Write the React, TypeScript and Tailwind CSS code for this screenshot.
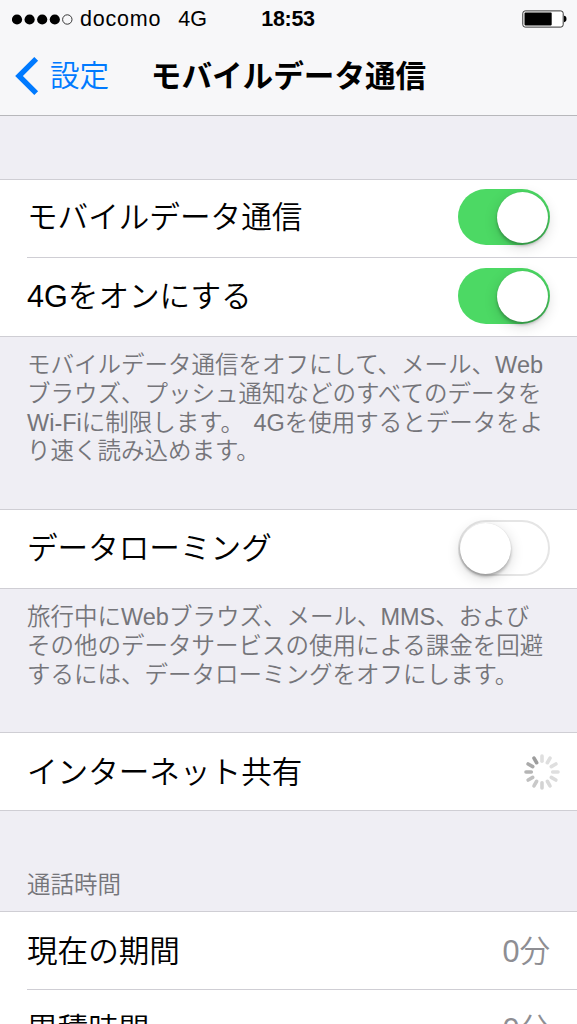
import React, { useState } from 'react';

interface SwitchProps {
  label: string;
  initial: boolean;
}

const Switch: React.FC<SwitchProps> = ({ label, initial }) => {
  const [on, setOn] = useState(initial);

  return (
    <button
      role="switch"
      aria-checked={on}
      aria-label={label}
      onClick={() => setOn(!on)}
      className={`flex h-14 w-[92px] shrink-0 items-center rounded-full ${
        on ? 'justify-end bg-[#4cd964] pr-[2.5px]' : 'justify-start border-[2.5px] border-[#e5e5e5] bg-white'
      }`}
    >
      <span className="size-[51px] rounded-full bg-white shadow-[0_0_1px_rgba(0,0,0,0.15),0_3px_3px_rgba(0,0,0,0.22),0_4px_14px_rgba(0,0,0,0.16)]" />
    </button>
  );
};

const SPOKES = ['#dfdfdf', '#dfdfdf', '#dfdfdf', '#dfdfdf', '#dbdbdb', '#d9d9d9', '#d3d3d3', '#c9c9c9', '#c0c0c0', '#b5b5b5', '#aaaaaa', '#9d9d9d'];

const Spinner = () => (
  <svg viewBox="-18 -18 36 36" className="mr-[-10px] size-9 shrink-0">
    {SPOKES.map((color, i) => (
      <line key={i} x1="0" y1="-10.7" x2="0" y2="-16" stroke={color} strokeWidth="3.6" strokeLinecap="round" transform={`rotate(${i * 30})`} />
    ))}
  </svg>
);

interface RowProps {
  label: string;
  className?: string;
  children: React.ReactNode;
}

const Row: React.FC<RowProps> = ({ label, className = 'h-[78px] pb-0.5', children }) => (
  <div className={`flex items-center justify-between pr-[27px] ${className}`}>
    <span className="whitespace-nowrap text-[30.6px] leading-10 text-black">{label}</span>
    {children}
  </div>
);

const Group: React.FC<{ children: React.ReactNode }> = ({ children }) => (
  <section className="border-y border-[#cfced4] bg-white pl-[27px]">
    <div className="divide-y divide-[#cfced4]">{children}</div>
  </section>
);

const Note: React.FC<{ lines: string[] }> = ({ lines }) => (
  <div className="whitespace-nowrap pl-[27px] text-[23.5px] leading-[28.8px] text-[#75757a] [word-spacing:3px]">
    {lines.map((line) => (
      <p key={line}>{line}</p>
    ))}
  </div>
);

const StatusBar = () => (
  <div className="grid h-9 grid-cols-3 items-center pl-3 pr-2.5 pt-px text-[21.5px] leading-9 text-black">
    <div className="flex items-center whitespace-nowrap">
      <svg viewBox="0 0 61 11" className="mr-[7px] h-[11px] w-[61px] shrink-0">
        {[5, 17.6, 30.2, 42.8].map((cx) => (
          <circle key={cx} cx={cx} cy="5.5" r="5.1" />
        ))}
        <circle cx="55.3" cy="5.5" r="4.7" fill="none" stroke="#222" strokeWidth="0.9" />
      </svg>
      <span className="tracking-[0.8px]">docomo</span>
      <span className="ml-[17px]">4G</span>
    </div>
    <span className="pr-[3px] text-center font-bold tracking-[-0.3px]">18:53</span>
    <svg viewBox="0 0 45 18" className="h-[18px] w-[45px] justify-self-end">
      <rect x="0.8" y="0.9" width="40.4" height="16.2" rx="2.4" fill="#fff" stroke="#333" strokeWidth="1" />
      <rect x="2.5" y="2.6" width="27.2" height="12.8" rx="0.8" />
      <path d="M42 5.8c1.8.2 2.5 1.6 2.5 3.2s-.7 3-2.5 3.2z" />
    </svg>
  </div>
);

const App = () => (
  <div className="h-[1024px] w-[577px] overflow-hidden bg-[#efeef4] font-['Liberation_Sans','Noto_Sans_CJK_JP',sans-serif] font-[350]" lang="ja">
    <header className="h-[116px] border-b border-[#b7b7bb] bg-[#f7f7f9]">
      <StatusBar />
      <nav className="grid h-[79px] grid-cols-[140px_297px_140px] items-center leading-10">
        <button className="flex items-center pl-[15px] text-[29.6px] text-[#007aff]">
          <svg viewBox="0 0 24 38" className="mr-[11px] h-[38px] w-6" fill="none" stroke="currentColor" strokeWidth="5.4">
            <path d="M21.2 1.9 4 19l17.2 17.1" />
          </svg>
          設定
        </button>
        <h1 className="whitespace-nowrap text-center text-[30.6px] font-bold text-black">モバイルデータ通信</h1>
      </nav>
    </header>

    <main className="pt-[63px]">
      <Group>
        <Row label="モバイルデータ通信" className="h-[78px] pb-[3px]">
          <Switch label="モバイルデータ通信" initial />
        </Row>
        <Row label="4Gをオンにする">
          <Switch label="4Gをオンにする" initial />
        </Row>
      </Group>
      <div className="h-[172px] pt-[14px]">
        <Note
          lines={[
            'モバイルデータ通信をオフにして、メール、Web',
            'ブラウズ、プッシュ通知などのすべてのデータを',
            'Wi-Fiに制限します。 4Gを使用するとデータをよ',
            'り速く読み込めます。',
          ]}
        />
      </div>

      <Group>
        <Row label="データローミング">
          <Switch label="データローミング" initial={false} />
        </Row>
      </Group>
      <div className="h-[143px] pt-[14px]">
        <Note
          lines={[
            '旅行中にWebブラウズ、メール、MMS、および',
            'その他のデータサービスの使用による課金を回避',
            'するには、データローミングをオフにします。',
          ]}
        />
      </div>

      <Group>
        <Row label="インターネット共有" className="h-[77px]">
          <Spinner />
        </Row>
      </Group>
      <div className="h-[100px] pt-[60px]">
        <Note lines={['通話時間']} />
      </div>

      <Group>
        <Row label="現在の期間" className="h-[78px]">
          <span className="text-[30.6px] leading-10 text-[#8e8e93]">0分</span>
        </Row>
        <Row label="累積時間" className="h-[78px]">
          <span className="text-[30.6px] leading-10 text-[#8e8e93]">0分</span>
        </Row>
      </Group>
    </main>
  </div>
);

export default App;
